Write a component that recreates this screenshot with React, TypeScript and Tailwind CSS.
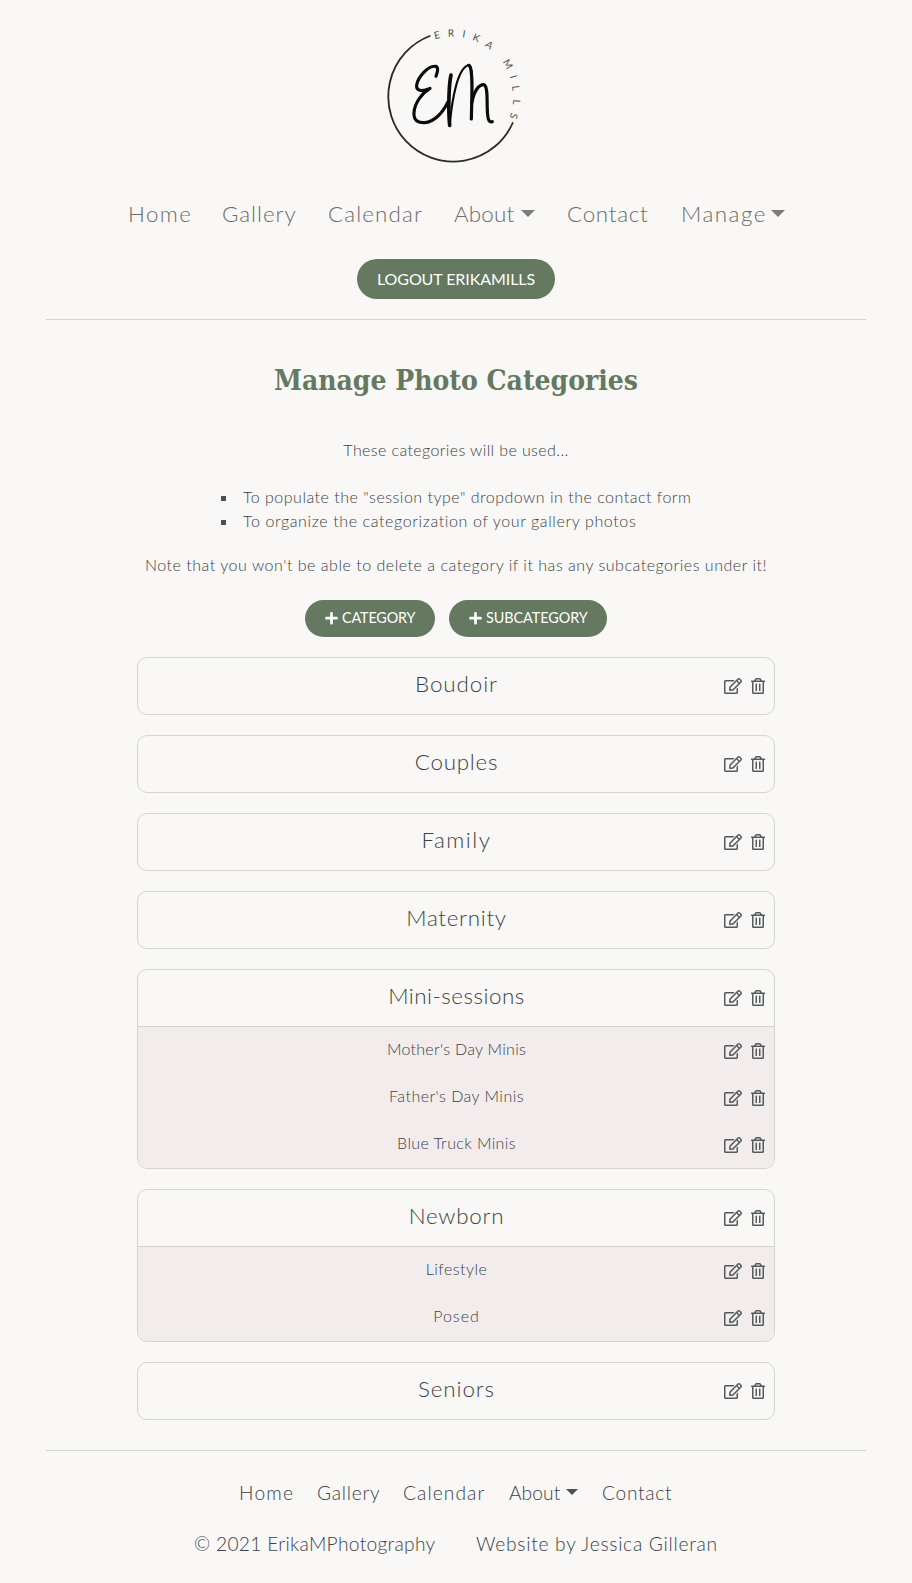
import { FaPlus, FaRegEdit, FaRegTrashAlt } from "react-icons/fa";

type Label = { text: string; tracking: string };
type NavItem = Label & { width: string; dropdown?: boolean };
type Category = Label & { children?: Label[] };

const headerNav: NavItem[] = [
  { text: "Home", tracking: "tracking-[1.4px]", width: "w-[94px]" },
  { text: "Gallery", tracking: "tracking-[0.97px]", width: "w-[106px]" },
  { text: "Calendar", tracking: "tracking-[1.13px]", width: "w-[126px]" },
  { text: "About", tracking: "tracking-[0.2px]", width: "w-[113px]", dropdown: true },
  { text: "Contact", tracking: "tracking-[0.72px]", width: "w-[114px]" },
  { text: "Manage", tracking: "tracking-[1.5px]", width: "w-[104px]", dropdown: true },
];

const footerNav: NavItem[] = [
  { text: "Home", tracking: "tracking-[1.2px]", width: "w-[78px]" },
  { text: "Gallery", tracking: "tracking-[0.74px]", width: "w-[86px]" },
  { text: "Calendar", tracking: "tracking-[1.08px]", width: "w-[106px]" },
  { text: "About", tracking: "tracking-[0.1px]", width: "w-[93px]", dropdown: true },
  { text: "Contact", tracking: "tracking-[0.7px]", width: "w-[71px]" },
];

const categories: Category[] = [
  { text: "Boudoir", tracking: "tracking-[0.9px]" },
  { text: "Couples", tracking: "tracking-[0.75px]" },
  { text: "Family", tracking: "tracking-[1.5px]" },
  { text: "Maternity", tracking: "tracking-[0.7px]" },
  {
    text: "Mini-sessions",
    tracking: "tracking-[0.5px]",
    children: [
      { text: "Mother's Day Minis", tracking: "tracking-[0.28px]" },
      { text: "Father's Day Minis", tracking: "tracking-[0.46px]" },
      { text: "Blue Truck Minis", tracking: "tracking-[0.37px]" },
    ],
  },
  {
    text: "Newborn",
    tracking: "tracking-[0.75px]",
    children: [
      { text: "Lifestyle", tracking: "tracking-[0.45px]" },
      { text: "Posed", tracking: "tracking-[1px]" },
    ],
  },
  { text: "Seniors", tracking: "tracking-[0.9px]" },
];

const ringLetters: [string, number, number, number][] = [
  ["E", 201, 60, -14],
  ["R", 243, 54, -2],
  ["I", 282, 57, 10],
  ["K", 319, 68, 22],
  ["A", 358, 89, 36],
  ["M", 414, 147, 60],
  ["I", 431, 185, 72],
  ["L", 438, 219, 83],
  ["L", 440, 261, 95],
  ["S", 432, 303, 108],
];

function Logo() {
  return (
    <svg viewBox="0 0 510 480" className="ml-[370px] block h-[160px] w-[170px]" fill="none" strokeLinecap="round" strokeLinejoin="round">
      <path d="M179 63A195 195 0 1 0 428 324" stroke="#2a2a2a" strokeWidth="5.5" />
      <g stroke="#0b0b0b" strokeWidth="9.5">
        <path d="M198 184C203 170 206 156 197 154C176 151 144 184 140 210C138 230 158 230 180 220C156 234 134 264 132 292C130 318 146 324 164 323C192 321 218 294 233 262" />
        <path d="M243 180C237 206 234 280 239 331" strokeWidth="11" />
        <path d="M240 322C246 256 262 162 294 151C312 146 306 240 304 312" strokeWidth="6.5" />
        <path d="M296 151C309 150 306 240 304 312" />
        <path d="M306 262C311 230 326 209 341 209C356 212 349 268 353 300C354 317 359 322 367 320" />
      </g>
      <g fill="#4c4c4c" fontSize="30" textAnchor="middle" className="font-[Lato] font-normal">
        {ringLetters.map(([letter, x, y, angle], i) => (
          <text key={i} transform={`translate(${x} ${y}) rotate(${angle})`} dy="11">
            {letter}
          </text>
        ))}
      </g>
    </svg>
  );
}

function Caret({ large }: { large?: boolean }) {
  return large ? (
    <svg viewBox="0 0 14 7" className="mt-[13px] ml-auto h-[7px] w-[14px] fill-[#7c7c7b]">
      <path d="M0 0H14L7 7Z" />
    </svg>
  ) : (
    <svg viewBox="0 0 12 6" className="mt-[11px] ml-auto h-[6px] w-[12px] fill-[#495057]">
      <path d="M0 0H12L6 6Z" />
    </svg>
  );
}

function Actions() {
  return (
    <div className="flex justify-end gap-[9px] pr-[9.5px] text-[#535b5c]">
      <button aria-label="Edit">
        <FaRegEdit className="h-[16px] w-[18px]" />
      </button>
      <button aria-label="Delete">
        <FaRegTrashAlt className="h-[16px] w-[14px]" />
      </button>
    </div>
  );
}

function CategoryCard({ category }: { category: Category }) {
  return (
    <section className="overflow-hidden rounded-[10px] border border-[#d2d6d3]">
      <div className="grid h-[56px] grid-cols-[1fr_auto_1fr] items-center">
        <span />
        <h2 className={`pb-[4px] pl-px text-[22.4px] leading-[50px] ${category.tracking}`}>{category.text}</h2>
        <Actions />
      </div>
      {category.children && (
        <div className="border-t border-[#d2d6d3] bg-[#f2ecec]">
          {category.children.map((child) => (
            <div key={child.text} className="grid h-[47px] grid-cols-[1fr_auto_1fr] items-center pt-px">
              <span />
              <span className={`pb-[5px] pl-px text-base ${child.tracking}`}>{child.text}</span>
              <Actions />
            </div>
          ))}
        </div>
      )}
    </section>
  );
}

export default function App() {
  return (
    <div className="h-[1583px] overflow-hidden bg-[#f9f8f6] pt-[15px] font-[Lato,sans-serif] font-light text-[#3b4247]">
      <header>
        <Logo />
        <nav className="mt-[22px] ml-[128px] flex h-[34px] text-[22.4px] leading-[34px] text-[#6a6a6a]">
          {headerNav.map((item) => (
            <a key={item.text} className={`block ${item.width}`}>
              <span className={`flex ${item.text === "About" ? "w-[81px]" : ""}`}>
                <span className={item.tracking}>{item.text}</span>
                {item.dropdown && <Caret large />}
              </span>
            </a>
          ))}
        </nav>
        <button className="mx-auto mt-[28px] flex h-[40px] w-[198px] items-center justify-center rounded-full bg-[#657860] text-base font-normal tracking-[-0.08px] text-white">
          LOGOUT ERIKAMILLS
        </button>
      </header>

      <hr className="mx-[46px] mt-[20px] border-[#d3d3d2]" />

      <main className="mx-auto w-[638px]">
        <h1 className="mt-[41px] text-center font-['DejaVu_Serif_Condensed','DejaVu_Serif',serif] text-[28px] leading-[40px] font-bold whitespace-nowrap text-[#657860]">
          Manage Photo Categories
        </h1>
        <p className="mt-[37px] text-center tracking-[0.39px]">These categories will be used...</p>
        <ul className="mt-[23px] ml-[84px] whitespace-nowrap">
          <li className="flex items-center gap-[17px]">
            <span className="mt-[2px] size-[5px] bg-[#495057]" />
            <span className="tracking-[0.5px]">To populate the "session type" dropdown in the contact form</span>
          </li>
          <li className="flex items-center gap-[17px]">
            <span className="mt-[2px] size-[5px] bg-[#495057]" />
            <span className="tracking-[0.62px]">To organize the categorization of your gallery photos</span>
          </li>
        </ul>
        <p className="mt-[20px] text-center tracking-[0.52px] whitespace-nowrap">
          Note that you won't be able to delete a category if it has any subcategories under it!
        </p>

        <div className="mt-[23px] ml-[168px] flex gap-[14px] text-[14.4px] font-normal text-white">
          <button className="flex h-[37px] w-[130px] items-center rounded-full bg-[#657860] pl-[20px]">
            <FaPlus className="mr-[4px] h-[14.4px] w-[13px]" />
            <span className="pb-px tracking-[-0.14px]">CATEGORY</span>
          </button>
          <button className="flex h-[37px] w-[158px] items-center rounded-full bg-[#657860] pl-[20px]">
            <FaPlus className="mr-[4px] h-[14.4px] w-[13px]" />
            <span className="pb-px tracking-[-0.05px]">SUBCATEGORY</span>
          </button>
        </div>

        <div className="mt-[20px] flex flex-col gap-[20px]">
          {categories.map((category) => (
            <CategoryCard key={category.text} category={category} />
          ))}
        </div>
      </main>

      <hr className="mx-[46px] mt-[30px] border-[#d0d6d1]" />

      <footer className="text-[19.2px] leading-[30px] whitespace-nowrap">
        <nav className="mt-[27px] ml-[239px] flex">
          {footerNav.map((item) => (
            <a key={item.text} className={`block ${item.width}`}>
              <span className={`flex ${item.dropdown ? "w-[69px]" : ""}`}>
                <span className={item.tracking}>{item.text}</span>
                {item.dropdown && <Caret />}
              </span>
            </a>
          ))}
        </nav>
        <div className="mt-[21px] ml-[194px] flex">
          <span className="w-[282px] tracking-[0.31px]">© 2021 ErikaMPhotography</span>
          <span className="tracking-[0.72px]">Website by Jessica Gilleran</span>
        </div>
      </footer>
    </div>
  );
}
